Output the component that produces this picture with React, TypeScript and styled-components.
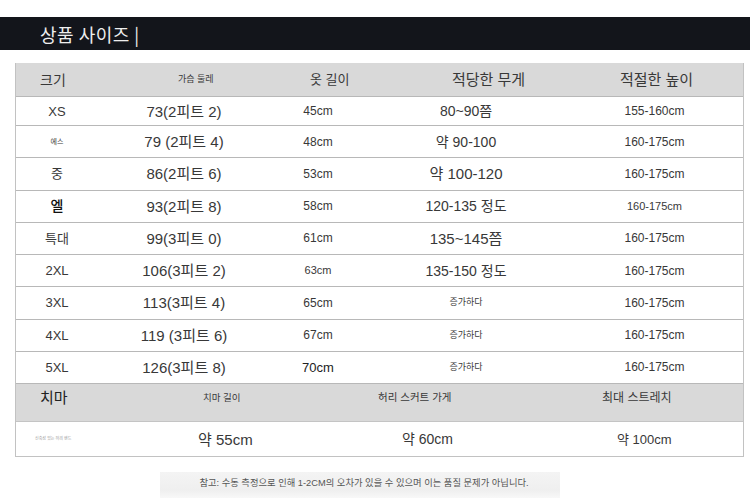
import React from "react";
import styled, { createGlobalStyle } from "styled-components";

const GlobalStyle = createGlobalStyle`
    html, body {
        margin: 0;
        padding: 0;
        background: #ffffff;
    }
    body {
        font-family: "Liberation Sans", "Noto Sans CJK KR", sans-serif;
        color: #333333;
    }
`;

type CellData = { text: string; size: number; color?: string; weight?: number };

const sizeRows: CellData[][] = [
    [
        { text: "XS", size: 13 },
        { text: "73(2피트 2)", size: 15 },
        { text: "45cm", size: 12 },
        { text: "80~90쯤", size: 14 },
        { text: "155-160cm", size: 12 },
    ],
    [
        { text: "에스", size: 7 },
        { text: "79 (2피트 4)", size: 15 },
        { text: "48cm", size: 12 },
        { text: "약 90-100", size: 14 },
        { text: "160-175cm", size: 12 },
    ],
    [
        { text: "중", size: 13 },
        { text: "86(2피트 6)", size: 15 },
        { text: "53cm", size: 12 },
        { text: "약 100-120", size: 15 },
        { text: "160-175cm", size: 12 },
    ],
    [
        { text: "엘", size: 14, color: "#111", weight: 500 },
        { text: "93(2피트 8)", size: 15 },
        { text: "58cm", size: 12 },
        { text: "120-135 정도", size: 14 },
        { text: "160-175cm", size: 11 },
    ],
    [
        { text: "특대", size: 13 },
        { text: "99(3피트 0)", size: 15 },
        { text: "61cm", size: 12 },
        { text: "135~145쯤", size: 15 },
        { text: "160-175cm", size: 12 },
    ],
    [
        { text: "2XL", size: 13 },
        { text: "106(3피트 2)", size: 15 },
        { text: "63cm", size: 11 },
        { text: "135-150 정도", size: 14 },
        { text: "160-175cm", size: 12 },
    ],
    [
        { text: "3XL", size: 13 },
        { text: "113(3피트 4)", size: 15 },
        { text: "65cm", size: 12 },
        { text: "증가하다", size: 9 },
        { text: "160-175cm", size: 12 },
    ],
    [
        { text: "4XL", size: 13 },
        { text: "119 (3피트 6)", size: 15 },
        { text: "67cm", size: 12 },
        { text: "증가하다", size: 9 },
        { text: "160-175cm", size: 12 },
    ],
    [
        { text: "5XL", size: 13 },
        { text: "126(3피트 8)", size: 15 },
        { text: "70cm", size: 13, color: "#222" },
        { text: "증가하다", size: 9 },
        { text: "160-175cm", size: 12 },
    ],
];

const headCells: CellData[] = [
    { text: "크기", size: 14 },
    { text: "가슴 둘레", size: 9 },
    { text: "옷 길이", size: 13 },
    { text: "적당한 무게", size: 15 },
    { text: "적절한 높이", size: 15 },
];

const skirtHead: CellData[] = [
    { text: "치마", size: 15, color: "#222" },
    { text: "치마 길이", size: 9.5 },
    { text: "허리 스커트 가게", size: 10.5 },
    { text: "최대 스트레치", size: 12 },
];

const skirtData: CellData[] = [
    { text: "신축성 있는 허리 밴드", size: 4, color: "#999" },
    { text: "약 55cm", size: 15 },
    { text: "약 60cm", size: 14 },
    { text: "약 100cm", size: 13 },
];

const App = () => {
    return (
        <Page>
            <GlobalStyle />
            <TitleBar>
                <Title>상품 사이즈 |</Title>
            </TitleBar>

            <Table>
                <HeadRow>
                    {headCells.map((c, i) => (
                        <Cell key={i} $size={c.size} $color={c.color} $weight={c.weight}>
                            {c.text}
                        </Cell>
                    ))}
                </HeadRow>
                {sizeRows.map((row, r) => (
                    <BodyRow key={r} $h={r === 0 ? 29 : 32.25}>
                        {row.map((c, i) => (
                            <Cell key={i} $size={c.size} $color={c.color} $weight={c.weight}>
                                {c.text}
                            </Cell>
                        ))}
                    </BodyRow>
                ))}
                <SkirtHeadRow>
                    {skirtHead.map((c, i) => (
                        <Cell key={i} $size={c.size} $color={c.color} $weight={c.weight}>
                            {c.text}
                        </Cell>
                    ))}
                </SkirtHeadRow>
                <SkirtDataRow>
                    {skirtData.map((c, i) => (
                        <Cell key={i} $size={c.size} $color={c.color} $weight={c.weight}>
                            {c.text}
                        </Cell>
                    ))}
                </SkirtDataRow>
            </Table>

            <NoteRow>
                <Note>참고: 수동 측정으로 인해 1-2CM의 오차가 있을 수 있으며 이는 품질 문제가 아닙니다.</Note>
            </NoteRow>
        </Page>
    );
};

const Page = styled.div`
    width: 750px;
    height: 504px;
    padding-top: 17px;
    box-sizing: border-box;
    overflow: hidden;
`;

const TitleBar = styled.div`
    height: 33px;
    background-color: #13151b;
    display: flex;
    align-items: center;
    padding-left: 40px;
`;

const Title = styled.span`
    font-family: "Noto Sans CJK KR", "Liberation Sans", sans-serif;
    font-size: 18px;
    color: #eeeeee;
    line-height: 1;
    letter-spacing: 0.5px;
`;

const Table = styled.div`
    margin: 13px 6px 0 15px;
    border: 1px solid #c2c2c2;
    border-top: none;
    display: flex;
    flex-direction: column;
`;

const Cell = styled.div<{ $size: number; $color?: string; $weight?: number }>`
    font-size: ${(p) => p.$size}px;
    color: ${(p) => p.$color || "#383838"};
    font-weight: ${(p) => p.$weight || 400};
    line-height: 1;
    white-space: nowrap;
`;

const HeadRow = styled.div`
    height: 34px;
    box-sizing: border-box;
    background-color: #d9d9d9;
    display: grid;
    grid-template-columns: 138px 132px 142px 168px 1fr;
    align-items: center;
    padding-left: 24px;
    border-bottom: 1px solid #b8b8b8;
`;

const BodyRow = styled.div<{ $h: number }>`
    height: ${(p) => p.$h}px;
    box-sizing: border-box;
    display: grid;
    grid-template-columns: 82px 172px 96px 200px 1fr;
    align-items: center;
    justify-items: center;
    border-bottom: 1px solid #b8b8b8;
`;

const SkirtHeadRow = styled.div`
    height: 38px;
    box-sizing: border-box;
    background-color: #d9d9d9;
    display: grid;
    grid-template-columns: 163px 175px 224px 1fr;
    align-items: center;
    padding: 0 0 10px 24px;
    border-bottom: 1px solid #c4c4c4;
`;

const SkirtDataRow = styled.div`
    height: 34px;
    box-sizing: border-box;
    display: grid;
    grid-template-columns: 163px 204px 215px 1fr;
    align-items: center;
    padding-left: 19px;
`;

const NoteRow = styled.div`
    display: flex;
    padding-left: 160px;
    margin-top: 15px;
`;

const Note = styled.div`
    width: 400px;
    height: 26px;
    box-sizing: border-box;
    display: flex;
    align-items: center;
    justify-content: center;
    padding-left: 8px;
    padding-bottom: 6px;
    background: linear-gradient(180deg, #f4f4f4 0%, #efefef 70%, #f8f8f8 100%);
    font-size: 9.3px;
    color: #555555;
    white-space: nowrap;
`;

export default App;
